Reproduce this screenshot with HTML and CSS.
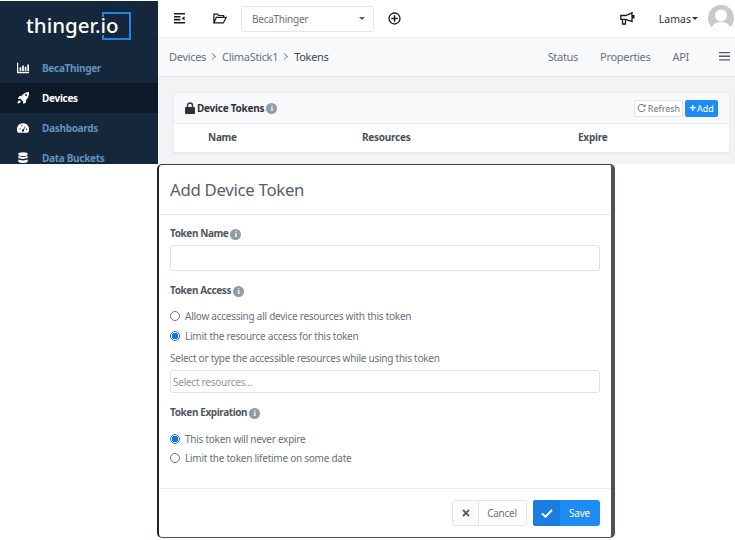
FILE: index.html
```html
<!DOCTYPE html>
<html lang="en">
<head>
<meta charset="utf-8">
<title>Add Device Token</title>
<link rel="stylesheet" href="styles.css">
</head>
<body>
<div class="app">
  <aside class="sidebar">
    <div class="logo"><span class="logo-text">thinger.io</span><span class="logo-box"></span></div>
    <nav class="nav">
      <a class="nav-item">
        <svg class="nav-icon" viewBox="0 0 14 14"><path fill="#fff" d="M0 1h1.500v10.500H14V13H0z"/><path fill="#fff" d="M3 6h2v4.500H3zM6 4h2v6.500H6zM9 5.500h2v5H9zM12 3h2v7.500h-2z"/></svg>
        <span>BecaThinger</span>
      </a>
      <a class="nav-item active">
        <svg class="nav-icon" viewBox="0 0 14 14"><path fill="#fff" d="M14 0c.3 4-1 7-3.300 9l-.2 3.200L7.500 14l-.5-3-3-3-3 .2L2.500 5 5.500 4.500C7.500 2 10 .2 14 0z"/><circle cx="10.500" cy="3.500" r="1.100" fill="#0c1a28"/><path fill="#fff" d="M2.800 9.500c-1.300.3-2.300 2-2.300 4 2 0 3.500-1 4-2.300z"/></svg>
        <span>Devices</span>
      </a>
      <a class="nav-item">
        <svg class="nav-icon" viewBox="0 0 14 14"><path fill="#fff" d="M7 1.500A7 7 0 0 0 1.200 12.500h11.600A7 7 0 0 0 7 1.500z"/><circle cx="7" cy="10" r="1.400" fill="#15273a"/><path stroke="#15273a" stroke-width="1" d="M7 10l2.500-4.500"/><circle cx="3.500" cy="8" r=".8" fill="#15273a"/><circle cx="5.500" cy="4.500" r=".8" fill="#15273a"/><circle cx="11" cy="8.500" r=".8" fill="#15273a"/></svg>
        <span>Dashboards</span>
      </a>
      <a class="nav-item">
        <svg class="nav-icon" viewBox="0 0 14 14"><ellipse cx="7" cy="2.500" rx="5.500" ry="2.200" fill="#fff"/><path fill="#fff" d="M1.500 4.500c1.500 1.700 9.500 1.700 11 0v2.300c-1.500 1.700-9.500 1.700-11 0zM1.500 8.500c1.500 1.700 9.500 1.700 11 0v2.800c-1.500 2.200-9.500 2.200-11 0z"/></svg>
        <span>Data Buckets</span>
      </a>
    </nav>
  </aside>
  <main class="main">
    <header class="topbar">
      <svg class="tool-icon bars" viewBox="0 0 12 12"><path fill="#1b1b1b" d="M0 0h12v1.700H0zM0 3.200h7v1.700H0zM0 6.400h7v1.700H0zM0 9.800h12v1.700H0zM8.300 5.700l3.200-2.200v4.600z"/></svg>
      <svg class="tool-icon folder" viewBox="0 0 15 12"><path fill="none" stroke="#1b1b1b" stroke-width="1.300" d="M.8 10.800V1.200h4l1.200 1.500h5.500v2M.8 10.800h10.400l3-6H3.500z"/></svg>
      <div class="workspace"><span>BecaThinger</span><i class="caret caret-gray"></i></div>
      <svg class="tool-icon plus" viewBox="0 0 13 13"><circle cx="6.500" cy="6.500" r="5.500" fill="none" stroke="#1b1b1b" stroke-width="1.300"/><path stroke="#1b1b1b" stroke-width="1.500" d="M6.500 3.300v6.400M3.300 6.500h6.400"/></svg>
      <svg class="tool-icon horn" viewBox="0 0 15 13"><path fill="none" stroke="#1b1b1b" stroke-width="1.300" d="M.8 3.500h5L12 .8v8.700L5.800 7.300H.8zM2.500 7.500v4.500h3V7.500"/><path fill="#1b1b1b" d="M12 3h2.500v3.500H12z"/></svg>
      <div class="user"><span>Lamas</span><i class="caret caret-dark"></i></div>
      <svg class="avatar" viewBox="0 0 26 26"><defs><clipPath id="avatar-clip"><circle cx="13" cy="13" r="13"/></clipPath></defs><circle cx="13" cy="13" r="13" fill="#c9c9c9"/><g clip-path="url(#avatar-clip)"><circle cx="13" cy="10.500" r="6" fill="#fff"/><path fill="#fff" d="M3 26c0-6 5-9 10-9s10 3 10 9z"/></g></svg>
    </header>
    <div class="crumbs">
      <span class="crumb">Devices</span><span class="sep"></span>
      <span class="crumb">ClimaStick1</span><span class="sep"></span>
      <span class="crumb current">Tokens</span>
      <span class="tabs"><span>Status</span><span>Properties</span><span>API</span></span>
      <svg class="menu" viewBox="0 0 11 9"><path fill="#555c63" d="M0 0h11v1.300H0zM0 3.600h11v1.300H0zM0 7.300h11v1.300H0z"/></svg>
    </div>
    <section class="content">
      <div class="card">
        <div class="card-head">
          <svg class="lock" viewBox="0 0 10 12"><path fill="none" stroke="#2e3338" stroke-width="1.400" d="M2.500 6V3.500a2.500 2.500 0 0 1 5 0V6"/><rect y="5" width="10" height="7" rx="1" fill="#2e3338"/></svg>
          <strong>Device Tokens</strong>
          <i class="info">i</i>
          <span class="head-actions">
            <button class="btn-refresh"><svg class="refresh-icon" viewBox="0 0 10 10"><path fill="none" stroke="#555c63" stroke-width="1" d="M8.500 2.300A4 4 0 1 0 9 5.500"/><path fill="#555c63" d="M6.800 2.800L9.500 3V.3z"/></svg>Refresh</button>
            <button class="btn-add"><b>+</b>Add</button>
          </span>
        </div>
        <div class="table-head"><span class="col-name">Name</span><span class="col-res">Resources</span><span>Expire</span></div>
      </div>
    </section>
  </main>
</div>
<div class="modal">
  <h1 class="modal-title">Add Device Token</h1>
  <form class="modal-body">
    <label class="field-label">Token Name<i class="info">i</i></label>
    <div class="input name-input"></div>
    <label class="field-label access-label">Token Access<i class="info">i</i></label>
    <div class="radio"><i class="dot"></i>Allow accessing all device resources with this token</div>
    <div class="radio"><i class="dot on"></i>Limit the resource access for this token</div>
    <p class="hint">Select or type the accessible resources while using this token</p>
    <div class="input res-input">Select resources...</div>
    <label class="field-label expire-label">Token Expiration<i class="info">i</i></label>
    <div class="radio"><i class="dot on"></i>This token will never expire</div>
    <div class="radio"><i class="dot"></i>Limit the token lifetime on some date</div>
  </form>
  <footer class="modal-foot">
    <div class="btn cancel">
      <span class="btn-icon"><svg class="x" viewBox="0 0 8 8"><path stroke="#555c63" stroke-width="1.800" d="M1 1l6 6M7 1L1 7"/></svg></span>
      <span class="btn-text">Cancel</span>
    </div>
    <div class="btn save">
      <span class="btn-icon"><svg class="check" viewBox="0 0 12 9"><path fill="none" stroke="#fff" stroke-width="2" d="M1 4.500l3.500 3.200L11 1"/></svg></span>
      <span class="btn-text">Save</span>
    </div>
  </footer>
</div>
</body>
</html>
```
FILE: styles.css
```css
* { box-sizing: border-box; }
html, body { margin: 0; padding: 0; }
body {
  width: 735px;
  height: 540px;
  overflow: hidden;
  background: #fff;
  font-family: "Noto Sans", "Open Sans", sans-serif;
  font-size: 10px;
  letter-spacing: -.25px;
  color: #5c656d;
}
.app {
  display: flex;
  height: 164px;
  overflow: hidden;
}
.sidebar {
  width: 158px;
  flex: none;
  background: #15273a;
  margin-top: 1px;
}
.logo {
  position: relative;
  height: 48px;
  padding: 8px 0 0 26px;
}
.logo-text {
  position: relative;
  z-index: 1;
  color: #fff;
  font-size: 20.500px;
  font-weight: 500;
  line-height: 33px;
  letter-spacing: 0;
}
.logo-box {
  position: absolute;
  left: 102px;
  top: 11px;
  width: 29px;
  height: 28px;
  border: 2px solid #1f86e6;
}
.logo-box::before {
  content: "";
  position: absolute;
  left: -2px;
  top: 3px;
  width: 2px;
  height: 18px;
  background: #15273a;
}
.nav { padding-top: 4px; }
.nav-item {
  display: flex;
  align-items: center;
  height: 30px;
  padding-left: 17px;
  color: #6391c0;
  font-weight: 700;
  font-size: 10px;
  letter-spacing: -.3px;
}
.nav-item.active { background: #0c1a28; color: #fff; }
.nav-icon { width: 12px; height: 12px; margin-right: 13px; flex: none; }
.main {
  flex: 1;
  min-width: 0;
  background: #f1f3f5;
}
.topbar {
  display: flex;
  align-items: center;
  height: 38px;
  background: #fff;
  color: #2e3338;
  border-bottom: 1px solid #eceef0;
}
.tool-icon { flex: none; display: block; }
.bars { width: 11px; height: 11px; margin-left: 16px; }
.folder { width: 14px; height: 11px; margin-left: 28px; }
.workspace {
  display: flex;
  align-items: center;
  justify-content: space-between;
  width: 133px;
  height: 26px;
  margin-left: 14px;
  padding: 0 8px 0 10px;
  border: 1px solid #e3e6e9;
  border-radius: 3px;
  color: #6a737b;
}
.caret {
  width: 0;
  height: 0;
  border-style: solid;
  border-width: 3px 3px 0;
  border-color: transparent;
}
.caret-gray { border-top-color: #555c63; }
.caret-dark { border-top-color: #2e3338; margin-left: 1px; }
.plus { width: 13px; height: 13px; margin-left: 14px; }
.horn { width: 15px; height: 13px; margin-left: auto; }
.user {
  display: flex;
  align-items: center;
  margin-left: 24px;
  color: #2e3338;
  font-size: 10.500px;
  letter-spacing: 0;
}
.avatar { width: 26px; height: 26px; margin: -2px 1px 0 10px; flex: none; }
.crumbs {
  display: flex;
  align-items: center;
  height: 39px;
  padding: 0 5px 2px 11px;
  background: #f8f9fa;
  border-bottom: 1px solid #e5e7e9;
  font-size: 11px;
  letter-spacing: -.3px;
  color: #6a737b;
}
.current { color: #3f464c; }
.sep {
  width: 5px;
  height: 5px;
  margin: 0 7px 0 4px;
  border-top: 1px solid #8a9198;
  border-right: 1px solid #8a9198;
  transform: rotate(45deg);
}
.tabs { display: flex; gap: 22px; margin-left: auto; }
.menu { width: 11px; height: 9px; margin-left: 30px; flex: none; }
.content { padding: 15px 5px 0 15px; }
.card {
  background: #fff;
  border: 1px solid #e9ebed;
  border-radius: 2px;
  box-shadow: 0 1px 1px rgba(0,0,0,.05);
}
.card-head {
  display: flex;
  align-items: center;
  height: 31px;
  padding: 0 11px;
  background: #f8f9fa;
  border-bottom: 1px solid #eceef0;
  color: #2e3338;
}
.lock { width: 10px; height: 12px; margin-right: 2px; flex: none; }
.info {
  display: inline-block;
  width: 11px;
  height: 11px;
  margin-left: 2px;
  border-radius: 50%;
  background: #8f9ba5;
  color: #fff;
  font: 700 8px/11px "Liberation Serif", serif;
  letter-spacing: 0;
  text-align: center;
  vertical-align: 0;
}
.head-actions { display: flex; gap: 2px; margin-left: auto; }
button { font: inherit; padding: 0; }
.btn-refresh, .btn-add {
  display: flex;
  align-items: center;
  justify-content: center;
  height: 17px;
  border-radius: 2px;
  font-size: 9px;
}
.btn-refresh {
  width: 49px;
  border: 1px solid #e3e6e9;
  background: #fff;
  color: #6a737b;
}
.refresh-icon { width: 9px; height: 9px; margin-right: 2px; }
.btn-add {
  width: 33px;
  border: 0;
  background: #1f8bf5;
  color: #fff;
}
.btn-add b { font-size: 12px; line-height: 12px; margin-right: 1px; font-weight: 700; }
.table-head {
  display: flex;
  align-items: center;
  height: 28px;
  padding: 0 0 2px 34px;
  font-weight: 700;
  font-size: 10px;
  color: #4a5158;
}
.col-name { width: 154px; }
.col-res { width: 216px; }
.modal {
  width: 458px;
  height: 374px;
  margin-left: 157px;
  background: #fff;
  border-style: solid;
  border-color: #3a4048 #4c5259 #4c5259 #1c2630;
  border-width: 1px 4px 1px 2px;
  border-radius: 5px;
  display: flex;
  flex-direction: column;
}
.modal-title {
  margin: 0;
  height: 50px;
  padding: 0 11px;
  border-bottom: 1px solid #e8eaec;
  font-size: 16.800px;
  font-weight: 400;
  line-height: 49px;
  letter-spacing: -.3px;
  color: #56616a;
}
.modal-body {
  flex: 1;
  padding: 10px 11px 0;
}
.field-label {
  display: block;
  height: 16px;
  line-height: 16px;
  font-weight: 700;
  font-size: 10px;
  letter-spacing: -.4px;
  color: #4f575e;
}
.input {
  height: 26px;
  margin-top: 4px;
  border: 1px solid #e0e3e6;
  border-radius: 3px;
}
.access-label { margin-top: 11px; margin-bottom: 8.500px; }
.radio {
  display: flex;
  align-items: center;
  height: 19.500px;
  color: #68727a;
}
.dot {
  width: 10px;
  height: 10px;
  margin: 0 5px 0 0;
  border: 1px solid #6e757b;
  border-radius: 50%;
  flex: none;
}
.dot.on {
  border-color: #1173e6;
  background: radial-gradient(circle, #1173e6 0 3px, #fff 3.300px);
}
.hint { margin: 5.500px 0 0; height: 15px; line-height: 15px; color: #68727a; }
.res-input {
  height: 23px;
  margin-top: 4px;
  padding-left: 2px;
  line-height: 22px;
  color: #8e979f;
}
.expire-label { margin-top: 11px; margin-bottom: 9px; }
.modal-foot {
  display: flex;
  justify-content: flex-end;
  gap: 6px;
  height: 49px;
  padding: 11px 11px 0 0;
  border-top: 1px solid #eceef0;
}
.btn {
  display: flex;
  height: 26px;
  border-radius: 3px;
  overflow: hidden;
  line-height: 26px;
}
.btn-icon {
  display: flex;
  align-items: center;
  justify-content: center;
  height: 100%;
}
.cancel {
  width: 75px;
  border: 1px solid #e3e6e9;
  line-height: 24px;
  color: #6a737b;
}
.cancel .btn-icon { width: 26px; background: #fafbfc; border-right: 1px solid #e3e6e9; }
.cancel .btn-text { flex: 1; text-align: center; padding-right: 1px; }
.x { width: 8px; height: 8px; }
.save { width: 67px; background: #1f8bf5; color: #fff; }
.save .btn-icon { width: 27px; background: #1a7ee0; }
.save .btn-text { flex: 1; text-align: center; padding-right: 1px; }
.check { width: 12px; height: 9px; }
```
